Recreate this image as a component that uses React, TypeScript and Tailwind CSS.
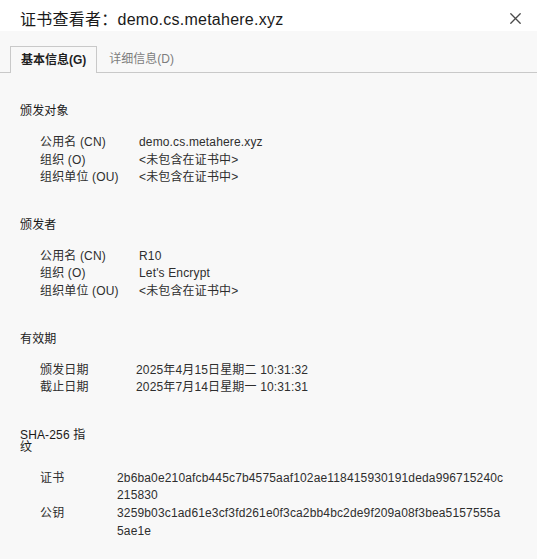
import React from "react";

type Row = { label: string; value: string[] };
type Section = { title: string; labelWidth: string; rows: Row[] };

const SECTIONS: Section[] = [
  {
    title: "颁发对象",
    labelWidth: "w-[99px]",
    rows: [
      { label: "公用名 (CN)", value: ["demo.cs.metahere.xyz"] },
      { label: "组织 (O)", value: ["<未包含在证书中>"] },
      { label: "组织单位 (OU)", value: ["<未包含在证书中>"] },
    ],
  },
  {
    title: "颁发者",
    labelWidth: "w-[99px]",
    rows: [
      { label: "公用名 (CN)", value: ["R10"] },
      { label: "组织 (O)", value: ["Let's Encrypt"] },
      { label: "组织单位 (OU)", value: ["<未包含在证书中>"] },
    ],
  },
  {
    title: "有效期",
    labelWidth: "w-[96px]",
    rows: [
      { label: "颁发日期", value: ["2025年4月15日星期二 10:31:32"] },
      { label: "截止日期", value: ["2025年7月14日星期一 10:31:31"] },
    ],
  },
  {
    title: "SHA-256 指纹",
    labelWidth: "w-[77px]",
    rows: [
      {
        label: "证书",
        value: ["2b6ba0e210afcb445c7b4575aaf102ae118415930191deda996715240c", "215830"],
      },
      {
        label: "公钥",
        value: ["3259b03c1ad61e3cf3fd261e0f3ca2bb4bc2de9f209a08f3bea5157555a", "5ae1e"],
      },
    ],
  },
];

function CloseIcon() {
  return (
    <svg width="11" height="11" viewBox="0 0 11 11" className="mt-[13px]">
      <path d="M0.8 0.8 L10.2 10.2 M10.2 0.8 L0.8 10.2" stroke="#4a4a4a" strokeWidth="1.3" strokeLinecap="round" />
    </svg>
  );
}

export default function App() {
  return (
    <div
      className="w-[537px] h-[559px] bg-[#f8f8f8] overflow-hidden"
      style={{ fontFamily: '"Liberation Sans", "Noto Sans CJK SC", sans-serif' }}
    >
      <div className="h-[31px] bg-white flex items-start justify-between pl-5 pr-[16px]">
        <h1 className="mt-[11px] text-[16px] leading-[18px] tracking-[0.25px] text-[#1a1a1a]">
          证书查看者：demo.cs.metahere.xyz
        </h1>
        <CloseIcon />
      </div>

      <div className="mt-[15px] h-[27px] flex items-stretch pl-[10px] border-b border-[#c9c9c9]">
        <div className="h-[27px] -mb-px px-[10px] flex items-center border-l border-t border-r border-[#c9c9c9] bg-[#f8f8f8] text-[12px] font-bold text-[#1f1f1f]">
          基本信息(G)
        </div>
        <div className="px-[12px] flex items-center text-[12px] text-[#7d7d7d]">详细信息(D)</div>
      </div>

      <div className="pl-5 pt-[32px] flex flex-col gap-[32px] tracking-[0.15px]">
        {SECTIONS.map((s) => (
          <section key={s.title}>
            <h2 className="w-[68px] text-[12px] leading-[12px] text-[#1a1a1a]">{s.title}</h2>
            <div className="mt-[17px] pl-5 text-[12px] leading-[17.6px] text-[#2e2e2e]">
              {s.rows.map((r) => (
                <div key={r.label} className="flex">
                  <div className={`${s.labelWidth} shrink-0`}>{r.label}</div>
                  <div>
                    {r.value.map((v) => (
                      <div key={v} className="whitespace-nowrap">{v}</div>
                    ))}
                  </div>
                </div>
              ))}
            </div>
          </section>
        ))}
      </div>
    </div>
  );
}
